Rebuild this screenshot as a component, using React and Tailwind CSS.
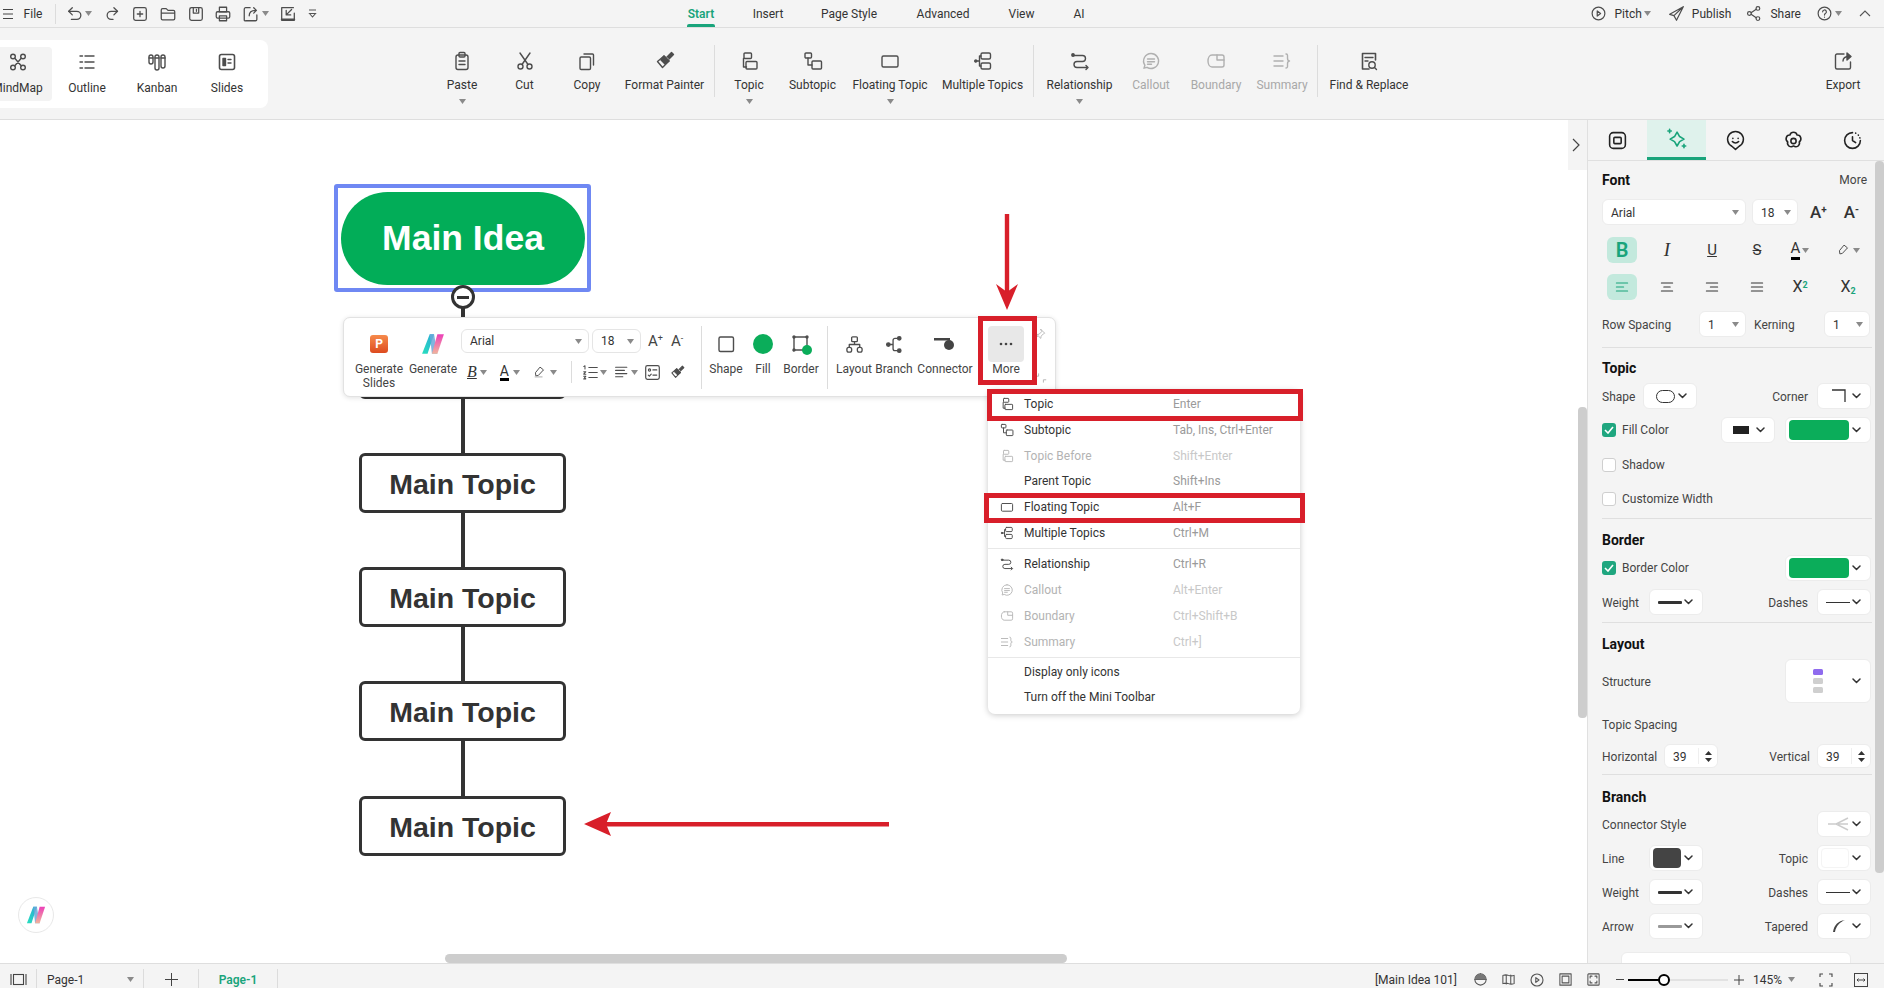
import React from "react";

const S = ({ s = 20, c = "#4d4d4d", w = 1.4, children, className = "" }) => (
  <svg width={s} height={s} viewBox="0 0 20 20" fill="none" stroke={c} strokeWidth={w} strokeLinecap="round" strokeLinejoin="round" className={className}>
    {children}
  </svg>
);

const Caret = ({ c = "#8a8a8a", className = "" }) => (
  <svg width="7" height="5" viewBox="0 0 7 5" className={className}><path d="M0 0h7L3.500 5z" fill={c} /></svg>
);
const Chev = ({ c = "#333" }) => (
  <svg width="9" height="6" viewBox="0 0 9 6" fill="none" stroke={c} strokeWidth="1.5" strokeLinecap="round" strokeLinejoin="round"><path d="M1 1l3.500 3.500L8 1" /></svg>
);

const I = {
  mind: (p) => <S {...p}><circle cx="5" cy="4.500" r="2.300" /><circle cx="15" cy="4.500" r="2.300" /><circle cx="5" cy="15.500" r="2.300" /><circle cx="15" cy="15.500" r="2.300" /><path d="M6.800 6.200l6.400 7.600M13.200 6.200L6.800 13.800" /></S>,
  outline: (p) => <S {...p}><path d="M3 4h2.500M8 4h9M3 10h2.500M8 10h9M3 16h2.500M8 16h9" /></S>,
  kanban: (p) => <S {...p}><rect x="2" y="3" width="4" height="9" rx="2" /><rect x="8" y="3" width="4" height="15" rx="2" /><rect x="14" y="3" width="4" height="13" rx="2" /><path d="M2 6h4M8 6h4M14 6h4" /></S>,
  slides: (p) => <S {...p}><rect x="2.500" y="2.500" width="15" height="15" rx="2" strokeWidth="1.600" /><rect x="6" y="6.500" width="2.500" height="7" fill="#4d4d4d" /><path d="M11 7.500h3M11 11h3" /></S>,
  paste: (p) => <S {...p}><rect x="4" y="4" width="12" height="14.500" rx="2" /><rect x="7" y="1.500" width="6" height="4.500" rx="1" /><path d="M7 10h6M7 13.500h6" /></S>,
  cut: (p) => <S {...p}><circle cx="5.500" cy="15.500" r="2.500" /><circle cx="14.500" cy="15.500" r="2.500" /><path d="M7 13.500L15 2M13 13.500L5 2" /></S>,
  copy: (p) => <S {...p}><rect x="3" y="6" width="10.500" height="12.500" rx="1.200" /><path d="M7 3h8.500a1 1 0 0 1 1 1v10" /></S>,
  brush: ({ s = 20, c = "#4d4d4d" }) => <S s={s} c={c}><path d="M2.500 10.500l5 6 6.500-6.500-5-5z" fill="none" /><path d="M6 9l3-4 5 5-4 3z" fill={c} /><path d="M12 6l4.500-4.500 2 2L14 8" fill={c} /></S>,
  topic: (p) => <S {...p}><rect x="5" y="2" width="7.500" height="5.500" rx="1" /><path d="M5 7.500h-.5V16h3" /><rect x="7" y="10.500" width="11" height="7.500" rx="1" /></S>,
  sub: (p) => <S {...p}><rect x="2" y="2" width="6.500" height="5" rx="1" /><path d="M5 7v7h4" /><rect x="9" y="10" width="9.500" height="8" rx="1" /></S>,
  float: (p) => <S {...p}><rect x="2" y="5" width="16" height="11" rx="1.500" /></S>,
  multi: (p) => <S {...p}><rect x="8" y="2" width="9.500" height="6" rx="1.500" /><rect x="8" y="12" width="9.500" height="6" rx="1.500" /><path d="M8 5H6.500v10H8M2 10h4.500" /><circle cx="2.800" cy="10" r="1" /></S>,
  rel: (p) => <S {...p}><path d="M4 4.500h8.500a3 3 0 0 1 0 6H7a3 3 0 0 0 0 6h10" /><circle cx="3" cy="4" r="1.200" fill={p.c || "#4d4d4d"} /><path d="M16 14.500l2 2-2 2" /></S>,
  callout: (p) => <S {...p}><path d="M10 2.500a7.500 7.500 0 1 1-4 13.800l-3 .9.9-3A7.500 7.500 0 0 1 10 2.500z" /><path d="M6.500 8h7M6.500 10.800h7M6.500 13.300h4" /></S>,
  boundary: (p) => <S {...p}><path d="M6 4h10a2 2 0 0 1 2 2v8a2 2 0 0 1-2 2H6c-2.500 0-4-2.800-4-6s1.500-6 4-6z" /><path d="M11 4v5h7" /></S>,
  summary: (p) => <S {...p}><path d="M2 5h9M2 10h9M2 15h9M14 3c2 0 1.500 2 1.500 4s.5 3 2 3c-1.500 0-2 1-2 3s.5 4-1.500 4" /></S>,
  find: (p) => <S {...p}><path d="M10 18H3.500V2.500h13V9" strokeWidth="1.600" /><path d="M6 6.500h8M6 10h3" /><circle cx="13" cy="14" r="3.200" /><path d="M15.500 16.500l2 2" /></S>,
  export: (p) => <S {...p}><path d="M11 3H4a1.500 1.500 0 0 0-1.500 1.500v12A1.500 1.500 0 0 0 4 18h12a1.500 1.500 0 0 0 1.500-1.500V11" /><path d="M10 10c0-3 2-4.500 6-4.500" /><path d="M14 2l4 3.500-4 3.500z" fill="#4d4d4d" /></S>,
  layout: (p) => <S {...p}><rect x="7" y="2" width="6" height="5" rx="1" /><path d="M10 7v3M4.500 13v-3h11v3" /><rect x="2" y="13" width="5" height="5" rx="2" /><rect x="13" y="13" width="5" height="5" rx="2" /></S>,
  branch: (p) => <S {...p}><circle cx="3.500" cy="10" r="1.800" fill="#4d4d4d" /><path d="M5 10h3M13 3.500h-2.500A2 2 0 0 0 8.500 5.500v9a2 2 0 0 0 2 2H13" /><circle cx="15" cy="3.500" r="1.800" fill="#4d4d4d" /><circle cx="15" cy="16.500" r="1.800" fill="#4d4d4d" /></S>,
};

const RB = ({ w, icon, label, caret, dis }) => (
  <div className={`${w} h-full flex flex-col items-center shrink-0`}>
    <div className="h-[20px] mt-[23px] flex items-center justify-center">{icon}</div>
    <div className={`mt-[6px] leading-[16px] whitespace-nowrap text-[12px] ${dis ? "text-[#a8a8a8]" : "text-[#333]"}`}>{label}</div>
    {caret && <Caret className="mt-[6px]" />}
  </div>
);
const RSep = () => <div className="w-px h-[52px] mt-[17px] mx-[3px] shrink-0 bg-[#dcdcdc]" />;

const VTab = ({ icon, label, w }) => (
  <div className={`${w} h-[54px] flex flex-col items-center pt-[5px]`}>
    {icon}
    <div className="mt-[8px] text-[12px] leading-[16px] whitespace-nowrap text-[#333]">{label}</div>
  </div>
);

function TopBar() {
  return (
    <div className="h-[28px] shrink-0 bg-[#f4f4f4] border-b border-[#dedede] flex items-center text-[12px] text-[#333] relative">
      <div className="w-[16px] flex pl-[3px]">
        <svg width="10" height="12" viewBox="0 0 10 12" fill="none" stroke="#444" strokeWidth="1.100"><path d="M0 1.500h10M0 6h10M0 10.500h10" /></svg>
      </div>
      <div className="w-[34px] text-center">File</div>
      <div className="w-px h-[20px] ml-[5px] bg-[#dcdcdc]" />
      <div className="ml-[10px] flex items-center">
        <S s={18}><path d="M7 3L3 7l4 4" /><path d="M3 7h9a4.500 4.500 0 0 1 0 9H6" /></S>
        <Caret className="ml-[1px]" />
        <div className="w-[12px]" />
        <S s={18}><path d="M11 3l4 4-4 4" /><path d="M15 7H8a4.500 4.500 0 0 0 0 9h2" /></S>
        <div className="w-[9px]" />
        <S s={18}><rect x="3" y="3" width="14" height="14" rx="2" /><path d="M10 7v6M7 10h6" /></S>
        <div className="w-[10px]" />
        <S s={18}><path d="M2.500 5.500a1.500 1.500 0 0 1 1.500-1.500h4l2 2h6a1.500 1.500 0 0 1 1.500 1.500V15a1.500 1.500 0 0 1-1.500 1.500H4A1.500 1.500 0 0 1 2.500 15zM2.500 9h15" /></S>
        <div className="w-[10px]" />
        <S s={18}><rect x="3" y="3" width="14" height="14" rx="2" /><path d="M7 3v6h6V3M10.500 5v2" /></S>
        <div className="w-[9px]" />
        <S s={18}><rect x="6" y="2.500" width="8" height="5" /><rect x="2.500" y="7.500" width="15" height="7" rx="1.500" /><rect x="6" y="12" width="8" height="5.500" /></S>
        <div className="w-[10px]" />
        <S s={18}><path d="M9 3H4a1.500 1.500 0 0 0-1.500 1.500v12A1 1 0 0 0 4 17.500h11a1.500 1.500 0 0 0 1.500-1.500v-5" /><path d="M8 12c0-4 2-6 7-6M13 3l3 3-3 3" /></S>
        <Caret className="ml-[2px]" />
        <div className="w-[10px]" />
        <S s={18}><path d="M16 3H3v14h14v-8" /><path d="M14 5l-6 6M8 6v5h5" /><path d="M3 16h14" strokeWidth="2" /></S>
        <div className="w-[11px]" />
        <svg width="9" height="10" viewBox="0 0 9 10" fill="none" stroke="#555" strokeWidth="1.100"><path d="M1 1h7M1.500 4.500L4.500 8 7.500 4.500z" /></svg>
      </div>
      <div className="absolute left-[687px] top-0 h-[27px] flex text-[12px]">
        <div className="w-[28px] h-full relative flex items-center justify-center whitespace-nowrap text-[#19a47b] font-semibold">
          Start
          <div className="absolute bottom-0 left-0 right-0 h-[3px] rounded-t-[2px] bg-[#19a47b]" />
        </div>
        <div className="w-[28px] ml-[39px] h-full flex items-center justify-center whitespace-nowrap">Insert</div>
        <div className="w-[54px] ml-[40px] h-full flex items-center justify-center whitespace-nowrap">Page Style</div>
        <div className="w-[52px] ml-[41px] h-full flex items-center justify-center whitespace-nowrap">Advanced</div>
        <div className="w-[25px] ml-[40px] h-full flex items-center justify-center whitespace-nowrap">View</div>
        <div className="w-[12px] ml-[39px] h-full flex items-center justify-center whitespace-nowrap">AI</div>
      </div>
      <div className="ml-auto flex items-center pr-[13px]">
        <S s={17}><circle cx="10" cy="10" r="7.500" /><path d="M8.500 7l4 3-4 3z" /></S>
        <span className="ml-[8px]">Pitch</span>
        <Caret className="ml-[2px]" />
        <div className="w-[17px]" />
        <S s={17}><path d="M18 2L2 11l5 1.500L18 2zM18 2L10 18l-3-5.500" /></S>
        <span className="ml-[7px]">Publish</span>
        <div className="w-[15px]" />
        <S s={17}><circle cx="14" cy="4" r="2.200" /><circle cx="4" cy="10" r="2.200" /><circle cx="14" cy="16" r="2.200" /><path d="M6 9l6-4M6 11l6 4" /></S>
        <span className="ml-[7px]">Share</span>
        <div className="w-[15px]" />
        <S s={17}><circle cx="10" cy="10" r="7.500" /><path d="M7.800 8a2.200 2.200 0 1 1 3.200 2c-.7.4-1 .8-1 1.800M10 14.300v.1" /></S>
        <Caret className="ml-[2px]" />
        <div className="w-[17px]" />
        <svg width="12" height="7" viewBox="0 0 12 7" fill="none" stroke="#555" strokeWidth="1.100"><path d="M1 6l5-5 5 5" /></svg>
      </div>
    </div>
  );
}

function Ribbon() {
  const g = "#b0b0b0";
  return (
    <div className="h-[92px] shrink-0 bg-[#f4f4f4] border-b border-[#dedede] flex">
      <div className="w-[268px] h-[68px] mt-[12px] bg-white rounded-r-[8px] flex items-center shrink-0 overflow-hidden">
        <div className="w-[52px] h-[54px] bg-[#f3f3f3] rounded-r-[4px] flex flex-col items-center pt-[5px] pr-[17px]">
          <I.mind />
          <div className="mt-[8px] text-[12px] leading-[16px] whitespace-nowrap text-[#333]">MindMap</div>
        </div>
        <VTab w="w-[70px]" icon={<I.outline />} label="Outline" />
        <VTab w="w-[70px]" icon={<I.kanban />} label="Kanban" />
        <VTab w="w-[70px]" icon={<I.slides />} label="Slides" />
      </div>
      <div className="w-[163px] shrink-0" />
      <RB w="w-[62px]" icon={<I.paste />} label="Paste" caret />
      <RB w="w-[63px]" icon={<I.cut />} label="Cut" />
      <RB w="w-[62px]" icon={<I.copy />} label="Copy" />
      <RB w="w-[93px]" icon={<I.brush />} label="Format Painter" />
      <div className="w-[1px] ml-[3px] h-[52px] mt-[17px] bg-[#dcdcdc] shrink-0" />
      <div className="w-[3px] shrink-0" />
      <RB w="w-[62px]" icon={<I.topic />} label="Topic" caret />
      <RB w="w-[65px]" icon={<I.sub />} label="Subtopic" />
      <RB w="w-[90px]" icon={<I.float />} label="Floating Topic" caret />
      <RB w="w-[95px]" icon={<I.multi />} label="Multiple Topics" />
      <RSep />
      <RB w="w-[85px]" icon={<I.rel />} label="Relationship" caret />
      <RB w="w-[58px]" icon={<I.callout c={g} />} label="Callout" dis />
      <RB w="w-[72px]" icon={<I.boundary c={g} />} label="Boundary" dis />
      <RB w="w-[60px]" icon={<I.summary c={g} />} label="Summary" dis />
      <div className="w-[2px] shrink-0" />
      <RSep />
      <RB w="w-[96px]" icon={<I.find />} label="Find & Replace" />
      <div className="ml-auto mr-[11px]"><RB w="w-[60px]" icon={<I.export />} label="Export" /></div>
    </div>
  );
}

const MColumn = ({ w, icon, label }) => (
  <div className={`${w} shrink-0 flex flex-col items-center pt-[16px]`}>
    <div className="h-[20px] flex items-center justify-center">{icon}</div>
    <div className="mt-[8px] text-[12px] leading-[14px] whitespace-nowrap text-[#444] text-center">{label}</div>
  </div>
);

const MLogo = ({ s = 22, id = "a" }) => (
  <svg width={s} height={s} viewBox="0 0 22 22">
    <defs>
      <linearGradient id={`mla${id}`} x1="0" y1="1" x2="1" y2="0"><stop offset="0" stopColor="#27e0bd" /><stop offset="1" stopColor="#2aa8d8" /></linearGradient>
      <linearGradient id={`mlb${id}`} x1="0" y1="0" x2="0" y2="1"><stop offset="0" stopColor="#ec3fb8" /><stop offset="1" stopColor="#f2b49c" /></linearGradient>
    </defs>
    <path d="M1 20L8 2h4L6 20z" fill={`url(#mla${id})`} />
    <path d="M8 2h4l3 18h-5z" fill="#6aa9d8" opacity=".85" />
    <path d="M15 2h6l-6 18h-5z" fill={`url(#mlb${id})`} />
  </svg>
);

function MiniToolbar() {
  return (
    <div className="absolute left-[343px] top-[197px] w-[713px] h-[80px] bg-white border border-[#e2e2e2] rounded-[7px] shadow-[0_1px_5px_rgba(0,0,0,0.12)] flex z-20">
      <div className="w-[11px] shrink-0" />
      <MColumn w="w-[48px]" icon={<div className="w-[18px] h-[18px] rounded-[3px] bg-gradient-to-b from-[#f68a4b] to-[#dd4a1e] flex items-center justify-center text-white text-[12px] font-bold">P</div>} label={<>Generate<br />Slides</>} />
      <MColumn w="w-[60px]" icon={<MLogo s={24} id="t" />} label="Generate" />
      <div className="w-[239px] shrink-0 pt-[11px]">
        <div className="flex items-center h-[24px] ml-[-2px] text-[12px] text-[#333]">
          <div className="w-[128px] h-[24px] border border-[#e5e5e5] rounded-[6px] flex items-center justify-between pl-[8px] pr-[6px]"><span>Arial</span><Caret /></div>
          <div className="w-[49px] ml-[3px] h-[24px] border border-[#e5e5e5] rounded-[6px] flex items-center justify-between pl-[8px] pr-[6px]"><span>18</span><Caret /></div>
          <div className="ml-[7px] text-[15px] text-[#444] leading-none">A<sup className="text-[9px]">+</sup></div>
          <div className="ml-[8px] text-[15px] text-[#444] leading-none">A<sup className="text-[9px]">-</sup></div>
        </div>
        <div className="flex items-center mt-[7px] h-[24px] ml-[-2px]">
          <div className="w-[110px] flex items-center">
            <span className="ml-[6px] font-['Liberation_Serif',serif] italic text-[16px] leading-none underline text-[#333]">B</span><Caret className="ml-[3px]" />
            <span className="ml-[13px] text-[14px] leading-none text-[#333] border-b-[3px] border-black">A</span><Caret className="ml-[4px]" />
            <span className="ml-[13px]"><S s={14}><path d="M4 15l-.5-4L10 3l5 4-7 7.500z" /><path d="M3 17h10" stroke="#aaa" /></S></span><Caret className="ml-[3px]" />
          </div>
          <div className="w-px h-[22px] bg-[#dcdcdc]" />
          <div className="flex items-center">
            <span className="ml-[10px]"><S s={17} w={1.200}><path d="M8 4h10M8 10h10M8 16h10M2 3l1.500-1V6M2 9h2.500L2 12h2.500M2 14.500h2.500L3 16l1.500 1.500H2" /></S></span><Caret className="ml-[1px]" />
            <span className="ml-[7px]"><S s={16}><path d="M2 4h14M2 8h11M2 12h14M2 16h9" /></S></span><Caret className="ml-[1px]" />
            <span className="ml-[6px]"><S s={17}><rect x="2" y="2" width="16" height="16" rx="2" /><circle cx="6.500" cy="7" r="1.300" /><path d="M10.500 7H15M10.500 13H15M5 13l1.300 1.300L8.500 12" /></S></span>
            <span className="ml-[9px]"><I.brush s={15} /></span>
          </div>
        </div>
      </div>
      <div className="w-px h-[63px] mt-[8px] bg-[#dcdcdc] shrink-0 ml-[-1px]" />
      <div className="w-[5px] shrink-0" />
      <MColumn w="w-[38px]" icon={<S s={20}><rect x="3" y="3" width="14.500" height="14.500" rx="1.500" /></S>} label="Shape" />
      <MColumn w="w-[36px]" icon={<div className="w-[20px] h-[20px] rounded-full bg-[#0bad5a]" />} label="Fill" />
      <MColumn w="w-[40px]" icon={<div className="relative"><S s={20}><rect x="3" y="3" width="13" height="13" /><circle cx="3" cy="3" r="1" fill="#444" /><circle cx="16" cy="3" r="1" fill="#444" /><circle cx="3" cy="16" r="1" fill="#444" /></S><div className="absolute right-[-1px] bottom-[-1px] w-[10px] h-[10px] rounded-full bg-[#0bad5a]" /></div>} label="Border" />
      <div className="w-[6px] shrink-0" />
      <div className="w-px h-[63px] mt-[8px] bg-[#dcdcdc] shrink-0" />
      <div className="w-[6px] shrink-0" />
      <MColumn w="w-[40px]" icon={<I.layout s={19} />} label="Layout" />
      <MColumn w="w-[40px]" icon={<I.branch s={19} />} label="Branch" />
      <MColumn w="w-[62px]" icon={<svg width="22" height="14" viewBox="0 0 22 14"><rect x="0" y="1" width="16" height="2.500" fill="#444" /><circle cx="15" cy="8" r="5" fill="#444" /></svg>} label="Connector" />
      <div className="w-[12px] shrink-0" />
      <div className="w-[36px] shrink-0 flex flex-col items-center pt-[8px]">
        <div className="w-[36px] h-[36px] bg-[#e8e8e8] rounded-[4px] flex items-center justify-center text-[#444]">
          <svg width="14" height="4" viewBox="0 0 14 4" fill="#444"><circle cx="2" cy="2" r="1.300" /><circle cx="7" cy="2" r="1.300" /><circle cx="12" cy="2" r="1.300" /></svg>
        </div>
        <div className="mt-[0px] text-[12px] leading-[15px] text-[#444]">More</div>
      </div>
      <div className="absolute left-[689px] top-[10px]"><S s={13} c="#b5b5b5"><path d="M12 2l6 6-2 1-3.500 3.500-.5 3.500-6-6 3.500-.5L13 6zM7 13l-5 5" /></S></div>
      <div className="absolute left-[691px] top-[54px]"><S s={12} c="#aaa"><path d="M2 7h4V3M18 13h-4v4" /></S></div>
      <div className="absolute left-[634px] top-[-2px] w-[59px] h-[69px] border-[5px] border-[#d81f2a]" />
    </div>
  );
}

const MI = ({ icon, label, sc, dis, h = "h-[26px]" }) => (
  <div className={`${h} flex items-center text-[12px] ${dis ? "text-[#b3b3b3]" : "text-[#333]"}`}>
    <div className="w-[36px] flex justify-end pr-[10px] shrink-0">{icon}</div>
    <div className="w-[149px] shrink-0 whitespace-nowrap">{label}</div>
    <div className={`whitespace-nowrap ${dis ? "text-[#c8c8c8]" : "text-[#9a9a9a]"}`}>{sc}</div>
  </div>
);

function Menu() {
  const g = "#b9b9b9";
  return (
    <div className="absolute left-[988px] top-[270px] w-[312px] h-[324px] bg-white rounded-[7px] shadow-[0_1px_6px_rgba(0,0,0,0.22)] pt-[1px] z-30">
      <MI icon={<I.topic s={14} />} label="Topic" sc="Enter" />
      <MI icon={<I.sub s={14} />} label="Subtopic" sc="Tab, Ins, Ctrl+Enter" />
      <MI icon={<I.topic s={14} c={g} />} label="Topic Before" sc="Shift+Enter" dis />
      <MI label="Parent Topic" sc="Shift+Ins" h="h-[24px]" />
      <MI icon={<I.float s={14} />} label="Floating Topic" sc="Alt+F" h="h-[27px]" />
      <MI icon={<I.multi s={14} />} label="Multiple Topics" sc="Ctrl+M" />
      <div className="h-px mt-[2px] bg-[#e8e8e8]" />
      <div className="mt-[2px]" />
      <MI icon={<I.rel s={14} />} label="Relationship" sc="Ctrl+R" />
      <MI icon={<I.callout s={14} c={g} />} label="Callout" sc="Alt+Enter" dis />
      <MI icon={<I.boundary s={14} c={g} />} label="Boundary" sc="Ctrl+Shift+B" dis />
      <MI icon={<I.summary s={14} c={g} />} label="Summary" sc="Ctrl+]" dis />
      <div className="h-px mt-[2px] bg-[#e8e8e8]" />
      <div className="mt-[1px]" />
      <MI label="Display only icons" />
      <MI label="Turn off the Mini Toolbar" h="h-[24px]" />
      <div className="absolute left-[-1px] top-[-1px] w-[316px] h-[32px] border-[5px] border-[#d81f2a]" />
      <div className="absolute left-[-4px] top-[103px] w-[321px] h-[30px] border-[5px] border-[#d81f2a]" />
    </div>
  );
}

function Canvas() {
  const node = "absolute left-[359px] w-[207px] h-[60px] pt-[3px] bg-white border-[3px] border-[#333] rounded-[6px] flex items-center justify-center font-bold text-[28.5px] text-[#333]";
  return (
    <div className="flex-1 relative bg-white overflow-hidden font-['Liberation_Sans',Arial,sans-serif]">
      <div className="absolute left-[461px] top-[170px] w-[4px] h-[520px] bg-[#333]" />
      <div className="absolute left-[334px] top-[64px] w-[257px] h-[108px] border-[4px] border-[#6f88f3] rounded-[3px]" />
      <div className="absolute left-[341px] top-[72px] w-[244px] h-[93px] rounded-[47px] bg-[#02ad58] flex items-center justify-center text-white font-bold text-[35.500px]">Main Idea</div>
      <div className="absolute left-[451px] top-[165px] w-[24px] h-[24px] rounded-full bg-white border-[3px] border-[#333] flex items-center justify-center"><div className="w-[12px] h-[3px] bg-[#333]" /></div>
      <div className={`${node} top-[219px]`} />
      <div className={`${node} top-[333px]`}>Main Topic</div>
      <div className={`${node} top-[447px]`}>Main Topic</div>
      <div className={`${node} top-[561px]`}>Main Topic</div>
      <div className={`${node} top-[676px]`}>Main Topic</div>
      <div className="font-['Roboto',sans-serif]"><MiniToolbar /><Menu /></div>
      <svg className="absolute left-[995px] top-[92px] z-40" width="24" height="100" viewBox="0 0 24 100"><path d="M9.800 2h4.400v80H9.800z" fill="#d81f2a" /><path d="M1 72l11 8 11-8-11 26z" fill="#d81f2a" /></svg>
      <svg className="absolute left-[583px] top-[690px] z-40" width="308" height="28" viewBox="0 0 308 28"><path d="M20 12h286v4.400H20z" fill="#d81f2a" /><path d="M28 2l-5 12 5 12L1 14z" fill="#d81f2a" /></svg>
      <div className="absolute left-[18px] top-[777px] w-[36px] h-[36px] rounded-full bg-white border border-[#e8e8e8] flex items-center justify-center"><MLogo s={20} id="f" /></div>
      <div className="absolute left-[445px] top-[834px] w-[622px] h-[9px] rounded-[5px] bg-[#cdcdcd]" />
      <div className="absolute right-[0px] top-[287px] w-[9px] h-[311px] rounded-[4px] bg-[#cdcdcd]" />
      <div className="absolute right-0 top-0 w-[19px] h-[50px] pr-[3px] bg-[#f4f4f4] flex items-center justify-center">
        <svg width="8" height="14" viewBox="0 0 8 14" fill="none" stroke="#444" strokeWidth="1.200"><path d="M1 1l6 6-6 6" /></svg>
      </div>
    </div>
  );
}

const Box = ({ w = "w-[54px]", h = "h-[26px]", children, className = "" }) => (
  <div className={`${w} ${h} bg-white rounded-[6px] border border-[#ececec] flex items-center shrink-0 ${className}`}>{children}</div>
);
const HBox = ({ w, children, h }) => (
  <Box w={w} h={h} className="justify-between pl-[8px] pr-[9px]">{children}<Chev /></Box>
);
const SelBox = ({ w, children }) => (
  <Box w={w} className="justify-between pl-[8px] pr-[6px] text-[#333]">{children}<Caret /></Box>
);
const Heading = ({ children, pt = "pt-[6px]" }) => (
  <div className={`h-[36px] ${pt} flex items-center text-[14px] font-bold text-[#111]`}>{children}</div>
);
const Divider = ({ mt }) => <div className={`h-px ${mt} bg-[#dfdfdf] mr-[-1px]`} />;
const Ln = ({ c = "#333", t = 2 }) => (t === 3 ? <div className="w-[24px] h-[3px] rounded-[1px]" style={{ background: c }} /> : <div className="w-[24px] h-px" style={{ background: c }} />);
const Check = ({ on }) => (
  <div className={`w-[14px] h-[14px] rounded-[3px] flex items-center justify-center shrink-0 ${on ? "bg-[#1fa67f]" : "bg-white border border-[#cfcfcf]"}`}>
    {on && <svg width="10" height="8" viewBox="0 0 10 8" fill="none" stroke="#fff" strokeWidth="1.600"><path d="M1 4l3 3 5-6" /></svg>}
  </div>
);
const Stepper = () => (
  <div className="flex flex-col gap-[3px] items-center pl-[6px] border-l border-[#efefef] h-[16px] justify-center">
    <svg width="7" height="4" viewBox="0 0 7 4"><path d="M0 4h7L3.500 0z" fill="#333" /></svg>
    <svg width="7" height="4" viewBox="0 0 7 4"><path d="M0 0h7L3.500 4z" fill="#333" /></svg>
  </div>
);

function Sidebar() {
  const K = "#222";
  return (
    <div className="w-[297px] shrink-0 bg-[#f4f4f4] border-l border-[#e0e0e0] relative overflow-hidden text-[12px] text-[#444]">
      <div className="h-[41px] border-b border-[#e0e0e0] flex">
        <div className="w-[59px] flex items-center justify-center"><S s={21} c={K} w={1.500}><rect x="2.500" y="2.500" width="15" height="15" rx="3.500" /><rect x="6.500" y="7" width="7" height="6" rx="1" /></S></div>
        <div className="w-[59px] bg-[#dff2ec] border-b-[3px] border-[#19a47b] flex items-center justify-center">
          <S s={23} c="#19a47b" w={1.400}><path d="M10.500 4.500l2.200 3.800 3.800 2.200-3.800 2.200-2.200 3.800-2.200-3.800-3.800-2.200 3.800-2.200z" /><path d="M4 2v3M2.500 3.500h3M16.500 15v3M15 16.500h3" /></S>
        </div>
        <div className="w-[58px] flex items-center justify-center"><S s={21} c={K} w={1.500}><path d="M10 18.500l-3.500-3A7.500 7.500 0 1 1 13.500 15.500z" /><path d="M7.500 8v.1M12.500 8v.1M7 11c1.500 1.800 4.500 1.800 6 0" /></S></div>
        <div className="w-[59px] flex items-center justify-center"><S s={21} c={K} w={1.500}><path d="M10 2.200c1.800 0 3 1.200 3.400 2.600 1.500-.1 3 .8 3.500 2.500.5 1.700-.3 3.100-1.400 4 .5 1.400.1 3-1.300 4-1.500 1-3 .7-4.200-.1-1.200.8-2.700 1.100-4.200.1-1.400-1-1.800-2.600-1.300-4-1.100-.9-1.900-2.300-1.400-4 .5-1.700 2-2.600 3.500-2.500C7 3.400 8.200 2.200 10 2.200z" /><circle cx="10" cy="10.500" r="2.500" /></S></div>
        <div className="w-[59px] flex items-center justify-center"><S s={21} c={K} w={1.500}><path d="M10 2.500a7.500 7.500 0 1 0 7.500 7.500M10 6.500V10l3 2" /><path d="M13 3l.1.1M15.500 4.800l.1.1M17 7.500l.1.1" /></S></div>
      </div>
      <div className="pl-[14px] pr-[13px] [&_span]:mt-[2px]">
        <div className="h-[38px] flex items-center justify-between"><div className="text-[14px] font-bold text-[#111]">Font</div><div className="text-[12px] text-[#444] mr-[4px]">More</div></div>
        <div className="flex items-center h-[26px]">
          <SelBox w="w-[144px]"><span>Arial</span></SelBox>
          <div className="w-[6px]" />
          <SelBox w="w-[46px]"><span>18</span></SelBox>
          <div className="ml-[12px] text-[17px] font-medium text-[#333] leading-none">A<sup className="text-[10px] font-bold">+</sup></div>
          <div className="ml-[17px] text-[17px] font-medium text-[#333] leading-none">A<sup className="text-[10px] font-bold">-</sup></div>
        </div>
        <div className="flex items-center h-[26px] mt-[12px] pl-[5px] text-[#333]">
          <div className="w-[30px] h-[26px] rounded-[6px] bg-[#c3e9dd] flex items-center justify-center text-[#19a47b] text-[20px] font-semibold">B</div>
          <div className="w-[15px]" />
          <div className="w-[30px] text-center text-[19px] italic font-['Liberation_Serif',serif]">I</div>
          <div className="w-[15px]" />
          <div className="w-[30px] text-center text-[15px] underline">U</div>
          <div className="w-[15px]" />
          <div className="w-[30px] text-center text-[15px] line-through">S</div>
          <div className="w-[13px]" />
          <div className="w-[30px] flex items-center justify-center"><div className="text-[15px] leading-[17px] border-b-[3px] border-black">A</div><Caret className="ml-[2px]" /></div>
          <div className="w-[18px]" />
          <div className="w-[30px] flex items-center justify-center"><S s={14}><path d="M4 15l-.5-4L10 3l5 4-7 7.500z" /></S><Caret className="ml-[2px]" /></div>
        </div>
        <div className="flex items-center h-[26px] mt-[11px] pl-[5px]">
          <div className="w-[30px] h-[26px] rounded-[6px] bg-[#c3e9dd] flex items-center justify-center"><S s={16} c="#19a47b"><path d="M3 5h14M3 10h9M3 15h14" /></S></div>
          <div className="w-[15px]" />
          <div className="w-[30px] flex justify-center"><S s={16} c="#333"><path d="M3 5h14M6 10h8M3 15h14" /></S></div>
          <div className="w-[15px]" />
          <div className="w-[30px] flex justify-center"><S s={16} c="#333"><path d="M3 5h14M8 10h9M3 15h14" /></S></div>
          <div className="w-[15px]" />
          <div className="w-[30px] flex justify-center"><S s={16} c="#333"><path d="M3 5h14M3 10h14M3 15h14" /></S></div>
          <div className="w-[13px]" />
          <div className="w-[30px] text-center text-[16px] text-[#333]">X<sup className="text-[9px] text-[#19a47b] font-bold">2</sup></div>
          <div className="w-[18px]" />
          <div className="w-[30px] text-center text-[16px] text-[#333]">X<sub className="text-[9px] text-[#19a47b] font-bold">2</sub></div>
        </div>
        <div className="flex items-center h-[26px] mt-[11px]">
          <span className="w-[97px]">Row Spacing</span>
          <SelBox w="w-[47px]"><span>1</span></SelBox>
          <span className="ml-[8px] w-[70px]">Kerning</span>
          <SelBox w="w-[46px]"><span>1</span></SelBox>
        </div>
        <Divider mt="mt-[10px]" />
        <Heading pt="pt-[5px]">Topic</Heading>
        <div className="flex items-center h-[26px] mt-[-1px]">
          <span className="w-[41px]">Shape</span>
          <HBox w="w-[54px]"><div className="w-[19px] h-[13px] border-[1.500px] border-[#333] rounded-[7px] ml-[4px]" /></HBox>
          <span className="ml-auto mr-[9px]">Corner</span>
          <HBox w="w-[54px]"><svg width="16" height="14" viewBox="0 0 16 14" fill="none" stroke="#333" strokeWidth="1.300" className="ml-[5px]"><path d="M1 1h13v12" /></svg></HBox>
        </div>
        <div className="flex items-center h-[26px] mt-[8px]">
          <Check on /><div className="ml-[6px]">Fill Color</div>
          <div className="ml-auto" />
          <HBox w="w-[54px]"><div className="w-[16px] h-[8px] bg-[#222] ml-[3px]" /></HBox>
          <div className="w-[10px]" />
          <Box w="w-[86px]" className="pl-[3px] pr-[9px] justify-between"><div className="w-[60px] h-[20px] rounded-[4px] bg-[#0bad5a]" /><Chev /></Box>
        </div>
        <div className="flex items-center h-[26px] mt-[9px]"><Check /><div className="ml-[6px]">Shadow</div></div>
        <div className="flex items-center h-[26px] mt-[8px]"><Check /><div className="ml-[6px]">Customize Width</div></div>
        <Divider mt="mt-[6px]" />
        <Heading>Border</Heading>
        <div className="flex items-center h-[26px]">
          <Check on /><div className="ml-[6px]">Border Color</div>
          <div className="ml-auto" />
          <Box w="w-[86px]" className="pl-[3px] pr-[9px] justify-between"><div className="w-[60px] h-[20px] rounded-[4px] bg-[#0bad5a]" /><Chev /></Box>
        </div>
        <div className="flex items-center h-[26px] mt-[8px]">
          <span className="w-[47px]">Weight</span>
          <HBox w="w-[54px]"><Ln t={3} /></HBox>
          <span className="ml-auto mr-[9px]">Dashes</span>
          <HBox w="w-[54px]"><Ln /></HBox>
        </div>
        <Divider mt="mt-[7px]" />
        <Heading>Layout</Heading>
        <div className="flex items-center h-[44px]">
          <span>Structure</span>
          <Box w="w-[86px]" h="h-[44px]" className="ml-auto justify-between pl-[27px] pr-[9px]">
            <div className="flex flex-col gap-[3px]"><div className="w-[10px] h-[6px] rounded-[1.500px] bg-[#8f6bee]" /><div className="w-[10px] h-[6px] rounded-[1.500px] bg-[#cfcfcf]" /><div className="w-[10px] h-[6px] rounded-[1.500px] bg-[#cfcfcf]" /></div>
            <Chev />
          </Box>
        </div>
        <div className="h-[41px] pt-[13px]">Topic Spacing</div>
        <div className="flex items-center h-[24px]">
          <span className="w-[62px]">Horizontal</span>
          <Box w="w-[54px]" h="h-[24px]" className="justify-between pl-[8px] pr-[5px] text-[#333]"><span>39</span><Stepper /></Box>
          <span className="ml-auto mr-[7px]">Vertical</span>
          <Box w="w-[54px]" h="h-[24px]" className="justify-between pl-[8px] pr-[5px] text-[#333]"><span>39</span><Stepper /></Box>
        </div>
        <Divider mt="mt-[6px]" />
        <Heading pt="pt-[8px]">Branch</Heading>
        <div className="flex items-center h-[26px]">
          <span>Connector Style</span>
          <Box w="w-[54px]" className="ml-auto justify-between pl-[10px] pr-[9px]"><svg width="21" height="16" viewBox="0 0 21 16" fill="none" stroke="#ccc" strokeWidth="1.500"><path d="M0 8h8M20 2L8 8l12 6M10 8h10" /></svg><Chev /></Box>
        </div>
        <div className="flex items-center h-[26px] mt-[8px]">
          <span className="w-[47px]">Line</span>
          <Box w="w-[54px]" className="justify-between pl-[3px] pr-[9px]"><div className="w-[28px] h-[20px] rounded-[4px] bg-[#444]" /><Chev /></Box>
          <span className="ml-auto mr-[9px]">Topic</span>
          <Box w="w-[54px]" className="justify-between pl-[3px] pr-[9px]"><div className="w-[28px] h-[20px] rounded-[4px] border border-[#f4f4f4]" /><Chev /></Box>
        </div>
        <div className="flex items-center h-[26px] mt-[8px]">
          <span className="w-[47px]">Weight</span>
          <HBox w="w-[54px]"><Ln t={3} /></HBox>
          <span className="ml-auto mr-[9px]">Dashes</span>
          <HBox w="w-[54px]"><Ln /></HBox>
        </div>
        <div className="flex items-center h-[26px] mt-[8px]">
          <span className="w-[47px]">Arrow</span>
          <HBox w="w-[54px]"><Ln c="#999" t={3} /></HBox>
          <span className="ml-auto mr-[9px]">Tapered</span>
          <HBox w="w-[54px]"><svg width="16" height="14" viewBox="0 0 16 14" fill="none" className="ml-[5px]"><path d="M2 13C3 6 7 2 14 1 9 3 5 7 4 13z" fill="#444" /></svg></HBox>
        </div>
        <div className="w-[230px] h-[40px] ml-[19px] mt-[13px] bg-white rounded-[6px] border border-[#ececec]" />
      </div>
      <div className="absolute right-0 top-[41px] w-[9px] h-[712px] rounded-[4px] bg-[#cdcdcd]" />
    </div>
  );
}

function Status() {
  const c = "#555";
  const Sep = ({ className = "" }) => <div className={`w-px h-[19px] self-end bg-[#dcdcdc] ${className}`} />;
  return (
    <div className="h-[25px] shrink-0 bg-[#f4f4f4] border-t border-[#dedede] flex items-center pt-[7px] text-[12px] text-[#333] relative z-50">
      <div className="w-[36px] flex justify-center"><svg width="17" height="13" viewBox="0 0 17 13" fill="none" stroke="#444" strokeWidth="1.100"><path d="M1 1v11M16 1v11" /><rect x="3.500" y="1.500" width="10" height="10" /></svg></div>
      <Sep />
      <div className="w-[100px] ml-[3px] flex items-center justify-between pl-[7px] pr-[6px]"><span>Page-1</span><Caret /></div>
      <Sep className="ml-[3px]" />
      <div className="w-[54px] flex justify-center"><svg width="13" height="13" viewBox="0 0 13 13" stroke="#444" strokeWidth="1"><path d="M6.500 0v13M0 6.500h13" /></svg></div>
      <Sep />
      <div className="w-[78px] text-center text-[#19a47b] font-semibold">Page-1</div>
      <Sep />
      <div className="ml-auto flex items-center pr-[16px]">
        <span className="mr-[10px]">[Main Idea 101]</span>
        <div className="w-[28px] flex justify-center"><S s={15} c={c}><circle cx="10" cy="10" r="7.500" /><path d="M2.500 10h15M10 2.500V10" /><path d="M10 2.500a7.500 7.500 0 0 0-7.500 7.500H10zm0 0a7.500 7.500 0 0 1 7.500 7.500H10z" fill="#777" stroke="none" /></S></div>
        <div className="w-[28px] flex justify-center"><S s={15} c={c}><path d="M2.500 4.500c3-1 5-1 7.500 0s4.500 1 7.500 0v11c-3 1-5 1-7.500 0s-4.500-1-7.500 0zM7 4v12M13 4v12" /></S></div>
        <div className="w-[29px] flex justify-center"><S s={16} c={c}><circle cx="10" cy="10" r="7.500" /><path d="M8.500 7l4 3-4 3z" /></S></div>
        <div className="w-[28px] flex justify-center"><S s={15} c={c}><rect x="2.500" y="2.500" width="15" height="15" /><rect x="5.500" y="5.500" width="9" height="9" /></S></div>
        <div className="w-[28px] flex justify-center"><S s={15} c={c}><rect x="2.500" y="2.500" width="15" height="15" rx="1" /><path d="M5.500 8V5.500H8M14.500 8V5.500H12M5.500 12v2.500H8M14.500 12v2.500H12" /></S></div>
        <div className="w-[16px] flex justify-center ml-[4px]"><div className="w-[8px] h-px bg-[#444]" /></div>
        <div className="w-[100px] h-[2px] bg-[#e2e2e2] relative flex items-center">
          <div className="w-[36px] h-[2px] bg-black" />
          <div className="absolute left-[30px] w-[12px] h-[12px] rounded-full bg-white border-[2px] border-black" />
        </div>
        <div className="w-[22px] flex justify-center"><svg width="10" height="10" viewBox="0 0 10 10" stroke="#444" strokeWidth="1"><path d="M5 0v10M0 5h10" /></svg></div>
        <span className="ml-[3px]">145%</span>
        <Caret className="ml-[6px]" />
        <div className="w-[38px] pl-[24px] flex items-center">
          <svg width="14" height="14" viewBox="0 0 14 14" fill="none" stroke="#444" strokeWidth="1.100" className="shrink-0"><path d="M1 4V1h3M13 4V1h-3M1 10v3h3M13 10v3h-3" /></svg>
        </div>
        <div className="ml-[21px]">
          <svg width="14" height="14" viewBox="0 0 14 14" fill="none" stroke="#444" strokeWidth="1"><rect x=".5" y=".5" width="13" height="13" /><path d="M3 7h8M3 7l1.500-1.500M3 7l1.500 1.500M11 7L9.500 5.500M11 7L9.500 8.500" /></svg>
        </div>
      </div>
    </div>
  );
}

export default function App() {
  return (
    <div className="w-[1884px] h-[988px] flex flex-col overflow-hidden bg-white font-['Roboto',sans-serif]">
      <TopBar />
      <Ribbon />
      <div className="flex-1 flex min-h-0">
        <Canvas />
        <Sidebar />
      </div>
      <Status />
    </div>
  );
}
